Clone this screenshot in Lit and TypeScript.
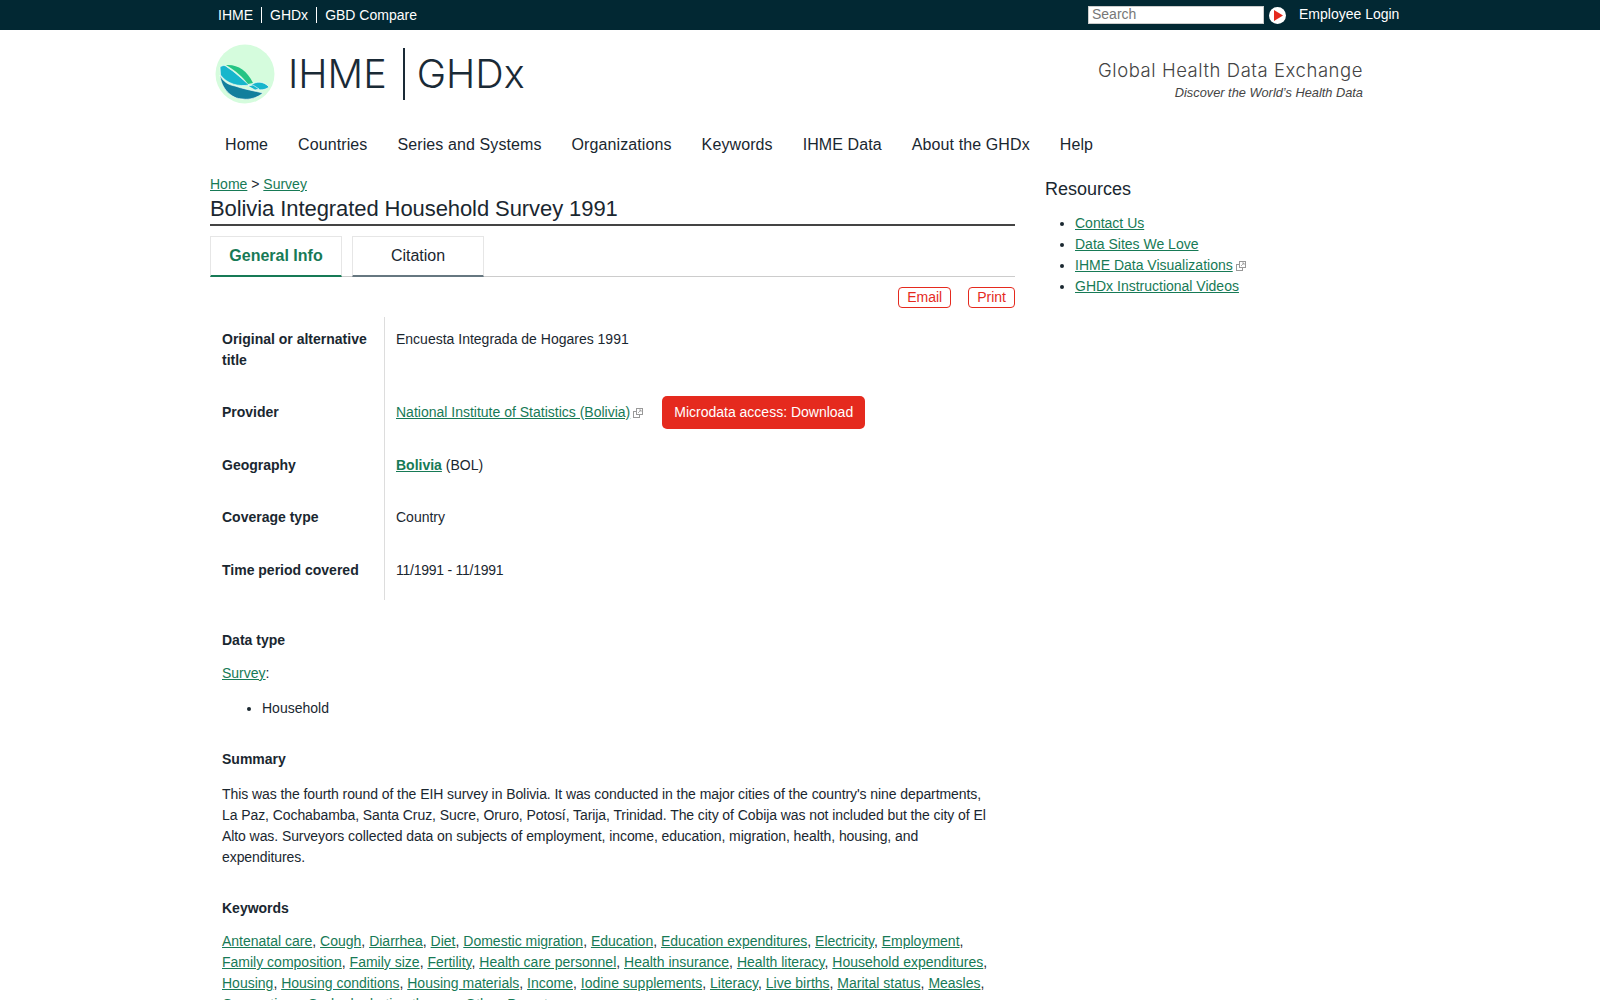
import {LitElement, html, css} from "lit"
import {customElement} from "lit/decorators.js"

const extIcon = html`<svg class="ext" width="10" height="10" viewBox="0 0 10 10" fill="none" stroke="#999" stroke-width="1"><rect x="0.5" y="3.5" width="6" height="6" fill="#fff"></rect><rect x="3.5" y="0.5" width="6" height="6" fill="#fff"></rect><path d="M5 5 L8 2 M6 2 H8 V4" stroke-width="0.8"></path></svg>`

const keywords = [
	"Antenatal care", "Cough", "Diarrhea", "Diet", "Domestic migration", "Education", "Education expenditures", "Electricity", "Employment",
	"Family composition", "Family size", "Fertility", "Health care personnel", "Health insurance", "Health literacy", "Household expenditures",
	"Housing", "Housing conditions", "Housing materials", "Income", "Iodine supplements", "Literacy", "Live births", "Marital status", "Measles",
	"Occupations", "Oral rehydration therapy", "Other", "Poverty",
]

const navItems = ["Home", "Countries", "Series and Systems", "Organizations", "Keywords", "IHME Data", "About the GHDx", "Help"]

@customElement("app-root")
export class AppRoot extends LitElement {

	static styles = css`
	:host {
		display: block;
		font-family: "Liberation Sans", Arial, sans-serif;
		font-size: 14px;
		line-height: 21px;
		color: #1a2730;
		height: 1000px;
		overflow: hidden;
	}
	a {
		color: #177a56;
	}
	.topbar {
		height: 30px;
		background: #022833;
		color: #fff;
	}
	.topbar-inner {
		width: 1180px;
		margin: 0 auto;
		display: flex;
		align-items: center;
		height: 30px;
	}
	.toplinks {
		display: flex;
		flex: 1;
		padding-bottom: 1px;
	}
	.toplinks span {
		padding: 0 8px;
		line-height: 16px;
		border-left: 1px solid #fff;
	}
	.toplinks span:first-child {
		border-left: 0;
	}
	.search {
		width: 176px;
		height: 18px;
		box-sizing: border-box;
		background: #fff;
		border: 1px solid #ccc;
		color: #777;
		padding-left: 3px;
		line-height: 15px;
	}
	.go {
		margin: 0 13px 0 5px;
		display: block;
	}
	.login {
		margin-right: -18px;
		width: 109px;
		padding-bottom: 2px;
	}
	.header {
		width: 1180px;
		margin: 0 auto;
		display: flex;
		justify-content: space-between;
		align-items: center;
		height: 88px;
		box-sizing: border-box;
		padding: 0 27px 0 5px;
	}
	.logo {
		display: flex;
		align-items: center;
		color: #1a2a36;
		font-family: Inter, sans-serif;
		font-weight: 300;
		font-size: 39.5px;
	}
	.logo svg {
		margin-right: 13px;
	}
	.logo .sep {
		width: 2px;
		height: 52px;
		background: #1a2a36;
		margin: 0 12px 0 16px;
	}
	.tag {
		text-align: right;
		padding-top: 13px;
	}
	.tag-main {
		font-family: Inter, sans-serif;
		font-size: 18.5px;
		font-weight: 300;
		letter-spacing: 0.55px;
		color: #444;
		line-height: 22px;
		padding-bottom: 2px;
	}
	.tag-sub {
		font-style: italic;
		font-size: 12.8px;
		color: #444;
		line-height: 20px;
	}
	nav {
		width: 1180px;
		margin: 0 auto;
		display: flex;
		font-size: 16px;
		letter-spacing: 0.1px;
		height: 50px;
		align-items: center;
		box-sizing: border-box;
		padding-top: 2px;
	}
	nav span {
		padding: 0 15px;
	}
	.columns {
		width: 1180px;
		margin: 0 auto;
		display: flex;
		gap: 30px;
	}
	main {
		width: 805px;
		padding-top: 6px;
	}
	aside {
		flex: 1;
	}
	aside h3 {
		margin: 0;
		font-weight: 400;
		font-size: 18px;
		line-height: 24px;
		padding-top: 9px;
	}
	aside ul {
		margin: 12px 0 0;
		padding-left: 30px;
	}
	.title {
		margin: 0;
		font-weight: 400;
		font-size: 22px;
		letter-spacing: -0.08px;
		line-height: 28px;
		padding-bottom: 1px;
		border-bottom: 2px solid #444;
	}
	.tabs {
		display: flex;
		gap: 10px;
		margin-top: 10px;
		height: 40px;
		border-bottom: 1px solid #ccc;
		font-size: 16px;
	}
	.tab {
		width: 132px;
		height: 41px;
		box-sizing: border-box;
		border: 1px solid #e6e6e6;
		border-bottom: 2px solid #667780;
		text-align: center;
		line-height: 38px;
	}
	.tab.active {
		color: #177a56;
		font-weight: 700;
		border-bottom-color: #177a56;
	}
	.actions {
		display: flex;
		justify-content: flex-end;
		gap: 17px;
		margin-top: 10px;
	}
	.pill {
		border: 1px solid #e52a1e;
		color: #e52a1e;
		border-radius: 4px;
		padding: 0 8px;
		line-height: 19px;
	}
	.rows {
		margin-top: 9px;
		display: grid;
		grid-template-columns: 174px 1fr;
	}
	.label {
		font-weight: 700;
		padding: 12px 12px 0;
	}
	.value {
		border-left: 1px solid #ddd;
		padding: 12px 11px 0;
	}
	.row-1 {
		height: 73px;
		box-sizing: border-box;
	}
	.row-n {
		height: 52.5px;
		box-sizing: border-box;
	}
	.provider {
		display: flex;
		align-items: center;
		height: 33px;
		margin-top: -6px;
	}
	.ext {
		margin-left: 3px;
		vertical-align: -1px;
	}
	.download {
		margin-left: 19px;
		background: #e52a1e;
		color: #fff;
		border-radius: 5px;
		padding: 0 12px;
		line-height: 33px;
	}
	.dates {
		letter-spacing: -0.25px;
	}
	.section {
		padding: 0 12px;
	}
	.section h4 {
		margin: 0;
		font-size: 14px;
		line-height: 21px;
	}
	.section p {
		margin: 0;
	}
	.section ul {
		margin: 0;
		padding-left: 40px;
	}
	.data-type {
		margin-top: 30px;
	}
	.data-type p {
		margin-top: 12px;
	}
	.data-type ul {
		margin-top: 14px;
	}
	.summary, .keywords {
		margin-top: 30px;
	}
	.summary p {
		margin-top: 14px;
		width: 771px;
		letter-spacing: -0.08px;
	}
	.keywords p {
		margin-top: 12px;
	}
	`

	render() {
		return html`
			<div class="topbar">
				<div class="topbar-inner">
					<div class="toplinks"><span>IHME</span><span>GHDx</span><span>GBD Compare</span></div>
					<div class="search">Search</div>
					<svg class="go" width="17" height="17" viewBox="0 0 17 17"><circle cx="8.5" cy="8.5" r="8.5" fill="#fff"></circle><path d="M5 3 L14 8.5 L5 14 Z" fill="#e52a1e"></path></svg>
					<div class="login">Employee Login</div>
				</div>
			</div>
			<div class="header">
				<div class="logo">
					<svg width="60" height="60" viewBox="0 0 60 60">
						<circle cx="30" cy="30" r="29.5" fill="#d5fcdd"></circle>
						<path d="M5 31 C8 38 14 41 20 42 C28 45 40 47 48 49 C42 54 34 56 28 55 C16 55 6 44 5 31 Z" fill="#127f9c" stroke="#fff" stroke-width="0.6"></path>
						<path d="M5 23 C8 21 10 21 12 23 C20 28 27 35 34 41 C24 43 12 40 5.5 31 Z" fill="#17b6cc" stroke="#fff" stroke-width="0.6"></path>
						<path d="M11 21 C22 20 32 26 38 39 L33 40 C28 33 21 27 11 21 Z" fill="#25c484"></path>
						<path d="M36 41 C41 37 49 37 54 43 C49 47 42 47 36 41 Z" fill="#17b6cc" stroke="#fff" stroke-width="0.6"></path>
						<path d="M33 42 L38 41 L44 45 L40 46 Z" fill="#17b6cc" stroke="#fff" stroke-width="0.6"></path>
					</svg>
					<span>IHME</span><span class="sep"></span><span>GHDx</span>
				</div>
				<div class="tag">
					<div class="tag-main">Global Health Data Exchange</div>
					<div class="tag-sub">Discover the World’s Health Data</div>
				</div>
			</div>
			<nav>${navItems.map(n => html`<span>${n}</span>`)}</nav>
			<div class="columns">
				<main>
					<div><a href="#">Home</a> &gt; <a href="#">Survey</a></div>
					<h1 class="title">Bolivia Integrated Household Survey 1991</h1>
					<div class="tabs">
						<div class="tab active">General Info</div>
						<div class="tab">Citation</div>
					</div>
					<div class="actions"><span class="pill">Email</span><span class="pill">Print</span></div>
					<div class="rows">
						<div class="label row-1">Original or alternative title</div>
						<div class="value row-1">Encuesta Integrada de Hogares 1991</div>
						<div class="label row-n">Provider</div>
						<div class="value row-n"><div class="provider"><a href="#">National Institute of Statistics (Bolivia)</a>${extIcon}<span class="download">Microdata access: Download</span></div></div>
						<div class="label row-n">Geography</div>
						<div class="value row-n"><a href="#"><b>Bolivia</b></a> (BOL)</div>
						<div class="label row-n">Coverage type</div>
						<div class="value row-n">Country</div>
						<div class="label row-n">Time period covered</div>
						<div class="value row-n dates">11/1991 - 11/1991</div>
					</div>
					<div class="section data-type">
						<h4>Data type</h4>
						<p><a href="#">Survey</a>:</p>
						<ul><li>Household</li></ul>
					</div>
					<div class="section summary">
						<h4>Summary</h4>
						<p>This was the fourth round of the EIH survey in Bolivia. It was conducted in the major cities of the country's nine departments, La Paz, Cochabamba, Santa Cruz, Sucre, Oruro, Potosí, Tarija, Trinidad. The city of Cobija was not included but the city of El Alto was. Surveyors collected data on subjects of employment, income, education, migration, health, housing, and expenditures.</p>
					</div>
					<div class="section keywords">
						<h4>Keywords</h4>
						<p>${keywords.map((k, i) => html`<a href="#">${k}</a>${i < keywords.length - 1 ? ", " : ""}`)}</p>
					</div>
				</main>
				<aside>
					<h3>Resources</h3>
					<ul>
						<li><a href="#">Contact Us</a></li>
						<li><a href="#">Data Sites We Love</a></li>
						<li><a href="#">IHME Data Visualizations</a>${extIcon}</li>
						<li><a href="#">GHDx Instructional Videos</a></li>
					</ul>
				</aside>
			</div>
		`
	}
}
